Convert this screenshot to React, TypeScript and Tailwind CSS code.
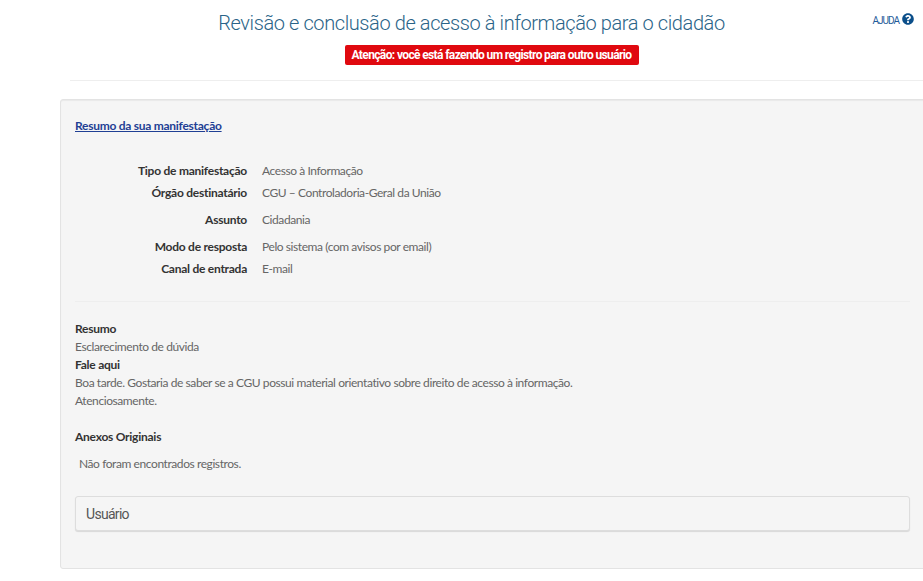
import React from "react";
import { FaQuestionCircle } from "react-icons/fa";

const details = [
  { label: "Tipo de manifestação", value: "Acesso à Informação", cls: "h-[22px]" },
  { label: "Órgão destinatário", value: "CGU – Controladoria-Geral da União", cls: "h-[22px] mb-[5px]" },
  { label: "Assunto", value: "Cidadania", cls: "h-[22px] mb-[5px]" },
  { label: "Modo de resposta", value: "Pelo sistema (com avisos por email)", cls: "h-[22px]" },
  { label: "Canal de entrada", value: "E-mail", cls: "h-[22px]" },
];

export default function App() {
  return (
    <div className="h-[581px] w-[923px] overflow-hidden bg-white font-['Lato',sans-serif] text-[12px] tracking-[-0.42px] text-[#666]">
      <header className="relative ml-[70px] h-[81px] border-b border-[#eee]">
        <h1 className="pt-[8px] pr-[50px] text-center font-['Roboto',sans-serif] text-[20px] leading-[30px] font-light tracking-[-0.4px] text-[#2a6488]">
          Revisão e conclusão de acesso à informação para o cidadão
        </h1>
        <div className="mt-[7px] flex justify-center pr-[10px]">
          <span className="flex h-[20px] w-[294px] items-center justify-center rounded-[2px] bg-[#e0090f] font-['Roboto',sans-serif] text-[12px] font-bold tracking-[-0.63px] whitespace-nowrap text-white">
            Atenção: você está fazendo um registro para outro usuário
          </span>
        </div>
        <a className="absolute top-[13px] right-[9px] flex items-end gap-[3px] font-['Roboto',sans-serif] text-[10px] leading-[12px] tracking-[-1px] text-[#1f5c99]">
          <span className="translate-y-[2px]">AJUDA</span>
          <FaQuestionCircle className="text-[12px] text-[#0b4f8a]" />
        </a>
      </header>

      <main className="mt-[18px] ml-[60px] h-[470px] w-[900px] rounded-[3px] border border-[#e3e3e3] bg-[#f5f5f5] pt-[17px] pl-[14px] shadow-[inset_0_1px_1px_rgba(0,0,0,0.05)]">
        <a className="text-[12px] leading-[16px] font-bold tracking-[-0.27px] text-[#1f3f94] underline">Resumo da sua manifestação</a>

        <dl className="mt-[25px] w-[835px] border-b border-[#eee] pb-[21px]">
          {details.map((row) => (
            <div key={row.label} className={`flex items-center ${row.cls}`}>
              <dt className="w-[172px] text-right font-bold tracking-[-0.25px] text-[#333]">{row.label}</dt>
              <dd className="ml-[15px]">{row.value}</dd>
            </div>
          ))}
        </dl>

        <section className="mt-[18px] leading-[18px]">
          <p className="font-bold tracking-[-0.25px] text-[#333]">Resumo</p>
          <p>Esclarecimento de dúvida</p>
          <p className="font-bold tracking-[-0.25px] text-[#333]">Fale aqui</p>
          <p>Boa tarde. Gostaria de saber se a CGU possui material orientativo sobre direito de acesso à informação.</p>
          <p>Atenciosamente.</p>
          <p className="mt-[18px] font-bold tracking-[-0.25px] text-[#333]">Anexos Originais</p>
          <p className="mt-[9px] pl-[4px]">Não foram encontrados registros.</p>
        </section>

        <div className="mt-[23px] flex h-[35px] w-[835px] items-center rounded-[3px] border border-[#ddd] bg-[#f5f5f5] pl-[10px] font-['Roboto',sans-serif] text-[14px] tracking-[-0.7px] text-[#555] shadow-[0_1px_1px_rgba(0,0,0,0.12)]">
          <span className="translate-y-[1px]">Usuário</span>
        </div>
      </main>
    </div>
  );
}
